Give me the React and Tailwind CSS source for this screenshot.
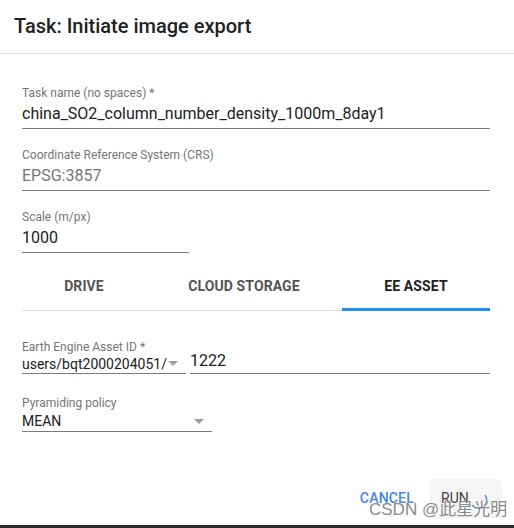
function TextField({ label, value, disabled, width = "w-full" }) {
  return (
    <div className={`${width} flex flex-col`}>
      <div className="text-[12px] leading-[14px] text-[#757575]">{label}</div>
      <div
        className={`mt-[4px] pb-[4px] text-[16px] leading-[20px] border-b border-[#7a7a7a] ${
          disabled ? "text-[#757575]" : "text-[#212121]"
        }`}
      >
        {value}
      </div>
    </div>
  );
}

function Arrow() {
  return (
    <svg width="10" height="5" viewBox="0 0 10 5" className="shrink-0">
      <path d="M0 0 L10 0 L5 5 Z" fill="#9e9e9e" />
    </svg>
  );
}

const tabs = [
  { name: "DRIVE", w: "w-[124px]" },
  { name: "CLOUD STORAGE", w: "w-[196px]" },
  { name: "EE ASSET", w: "w-[148px]", active: true },
];

export default function App() {
  return (
    <div className="w-[514px] h-[528px] bg-white relative overflow-hidden flex flex-col font-['Roboto','Liberation_Sans',sans-serif]">
      <div className="h-[54px] shrink-0 border-b border-[#e0e0e0] pl-[14px] pt-[12px]">
        <h1 className="text-[20px] leading-[28px] font-medium text-[#212121]">
          Task: Initiate image export
        </h1>
      </div>

      <div className="pl-[22px] pr-[24px] pt-[32px] flex flex-col">
        <TextField label="Task name (no spaces) *" value="china_SO2_column_number_density_1000m_8day1" />
        <div className="mt-[19px]">
          <TextField label="Coordinate Reference System (CRS)" value="EPSG:3857" disabled />
        </div>
        <div className="mt-[19px]">
          <TextField label="Scale (m/px)" value="1000" width="w-[167px]" />
        </div>

        <div className="mt-[10px] h-[48px] flex border-b border-[#e0e0e0]">
          {tabs.map((t) => (
            <div
              key={t.name}
              className={`${t.w} relative flex items-center justify-center text-[14px] font-bold tracking-[0.1px] ${
                t.active ? "text-[#212121]" : "text-[#555555]"
              }`}
            >
              {t.name}
              {t.active && (
                <span className="absolute left-0 right-0 bottom-[-1px] h-[3px] bg-[#1e8fef]" />
              )}
            </div>
          ))}
        </div>

        <div className="mt-[29px] flex flex-col">
          <div className="text-[12px] leading-[14px] text-[#757575]">Earth Engine Asset ID *</div>
          <div className="flex gap-[4px]">
            <div className="w-[164px] h-[20px] flex items-center justify-between pr-[8px] border-b border-[#7a7a7a] text-[14px] text-[#212121]">
              <span className="leading-[20px]">users/bqt2000204051/</span>
              <Arrow />
            </div>
            <div className="flex-1 h-[20px] border-b border-[#7a7a7a] text-[16px] leading-[14px] text-[#212121]">
              1222
            </div>
          </div>
        </div>

        <div className="mt-[22px] flex flex-col">
          <div className="text-[12px] leading-[14px] text-[#757575]">Pyramiding policy</div>
          <div className="mt-[1px] w-[190px] h-[21px] flex items-center justify-between pr-[8px] border-b border-[#7a7a7a] text-[14px] text-[#212121]">
            <span className="leading-[20px]">MEAN</span>
            <Arrow />
          </div>
        </div>
      </div>

      <div className="mt-[47px] h-[39px] flex items-center justify-end pr-[12px] gap-[16px]">
        <button className="text-[14px] font-medium text-[#4285f4] tracking-[0.2px]">CANCEL</button>
        <button className="h-[39px] w-[72px] rounded-[4px] bg-[#f5f5f5] flex items-center pl-[11px] text-[14px] text-[#424242]">
          RUN
          <svg width="20" height="22" viewBox="0 0 20 22" className="mt-[2px]">
            <path d="M3 16 A 8 8 0 0 0 16 6" fill="none" stroke="#5b8cf5" strokeWidth="1.5" />
          </svg>
        </button>
      </div>

      <div className="flex-1" />
      <div className="h-[3px] bg-[#2b2e30]" />

      <div className="absolute left-[369px] top-[500px] text-[17px] leading-[20px] text-[#8a8a8a] font-['Liberation_Sans','Noto_Sans_CJK_SC',sans-serif] [text-shadow:0_0_2px_white]">
        CSDN @此星光明
      </div>
    </div>
  );
}
